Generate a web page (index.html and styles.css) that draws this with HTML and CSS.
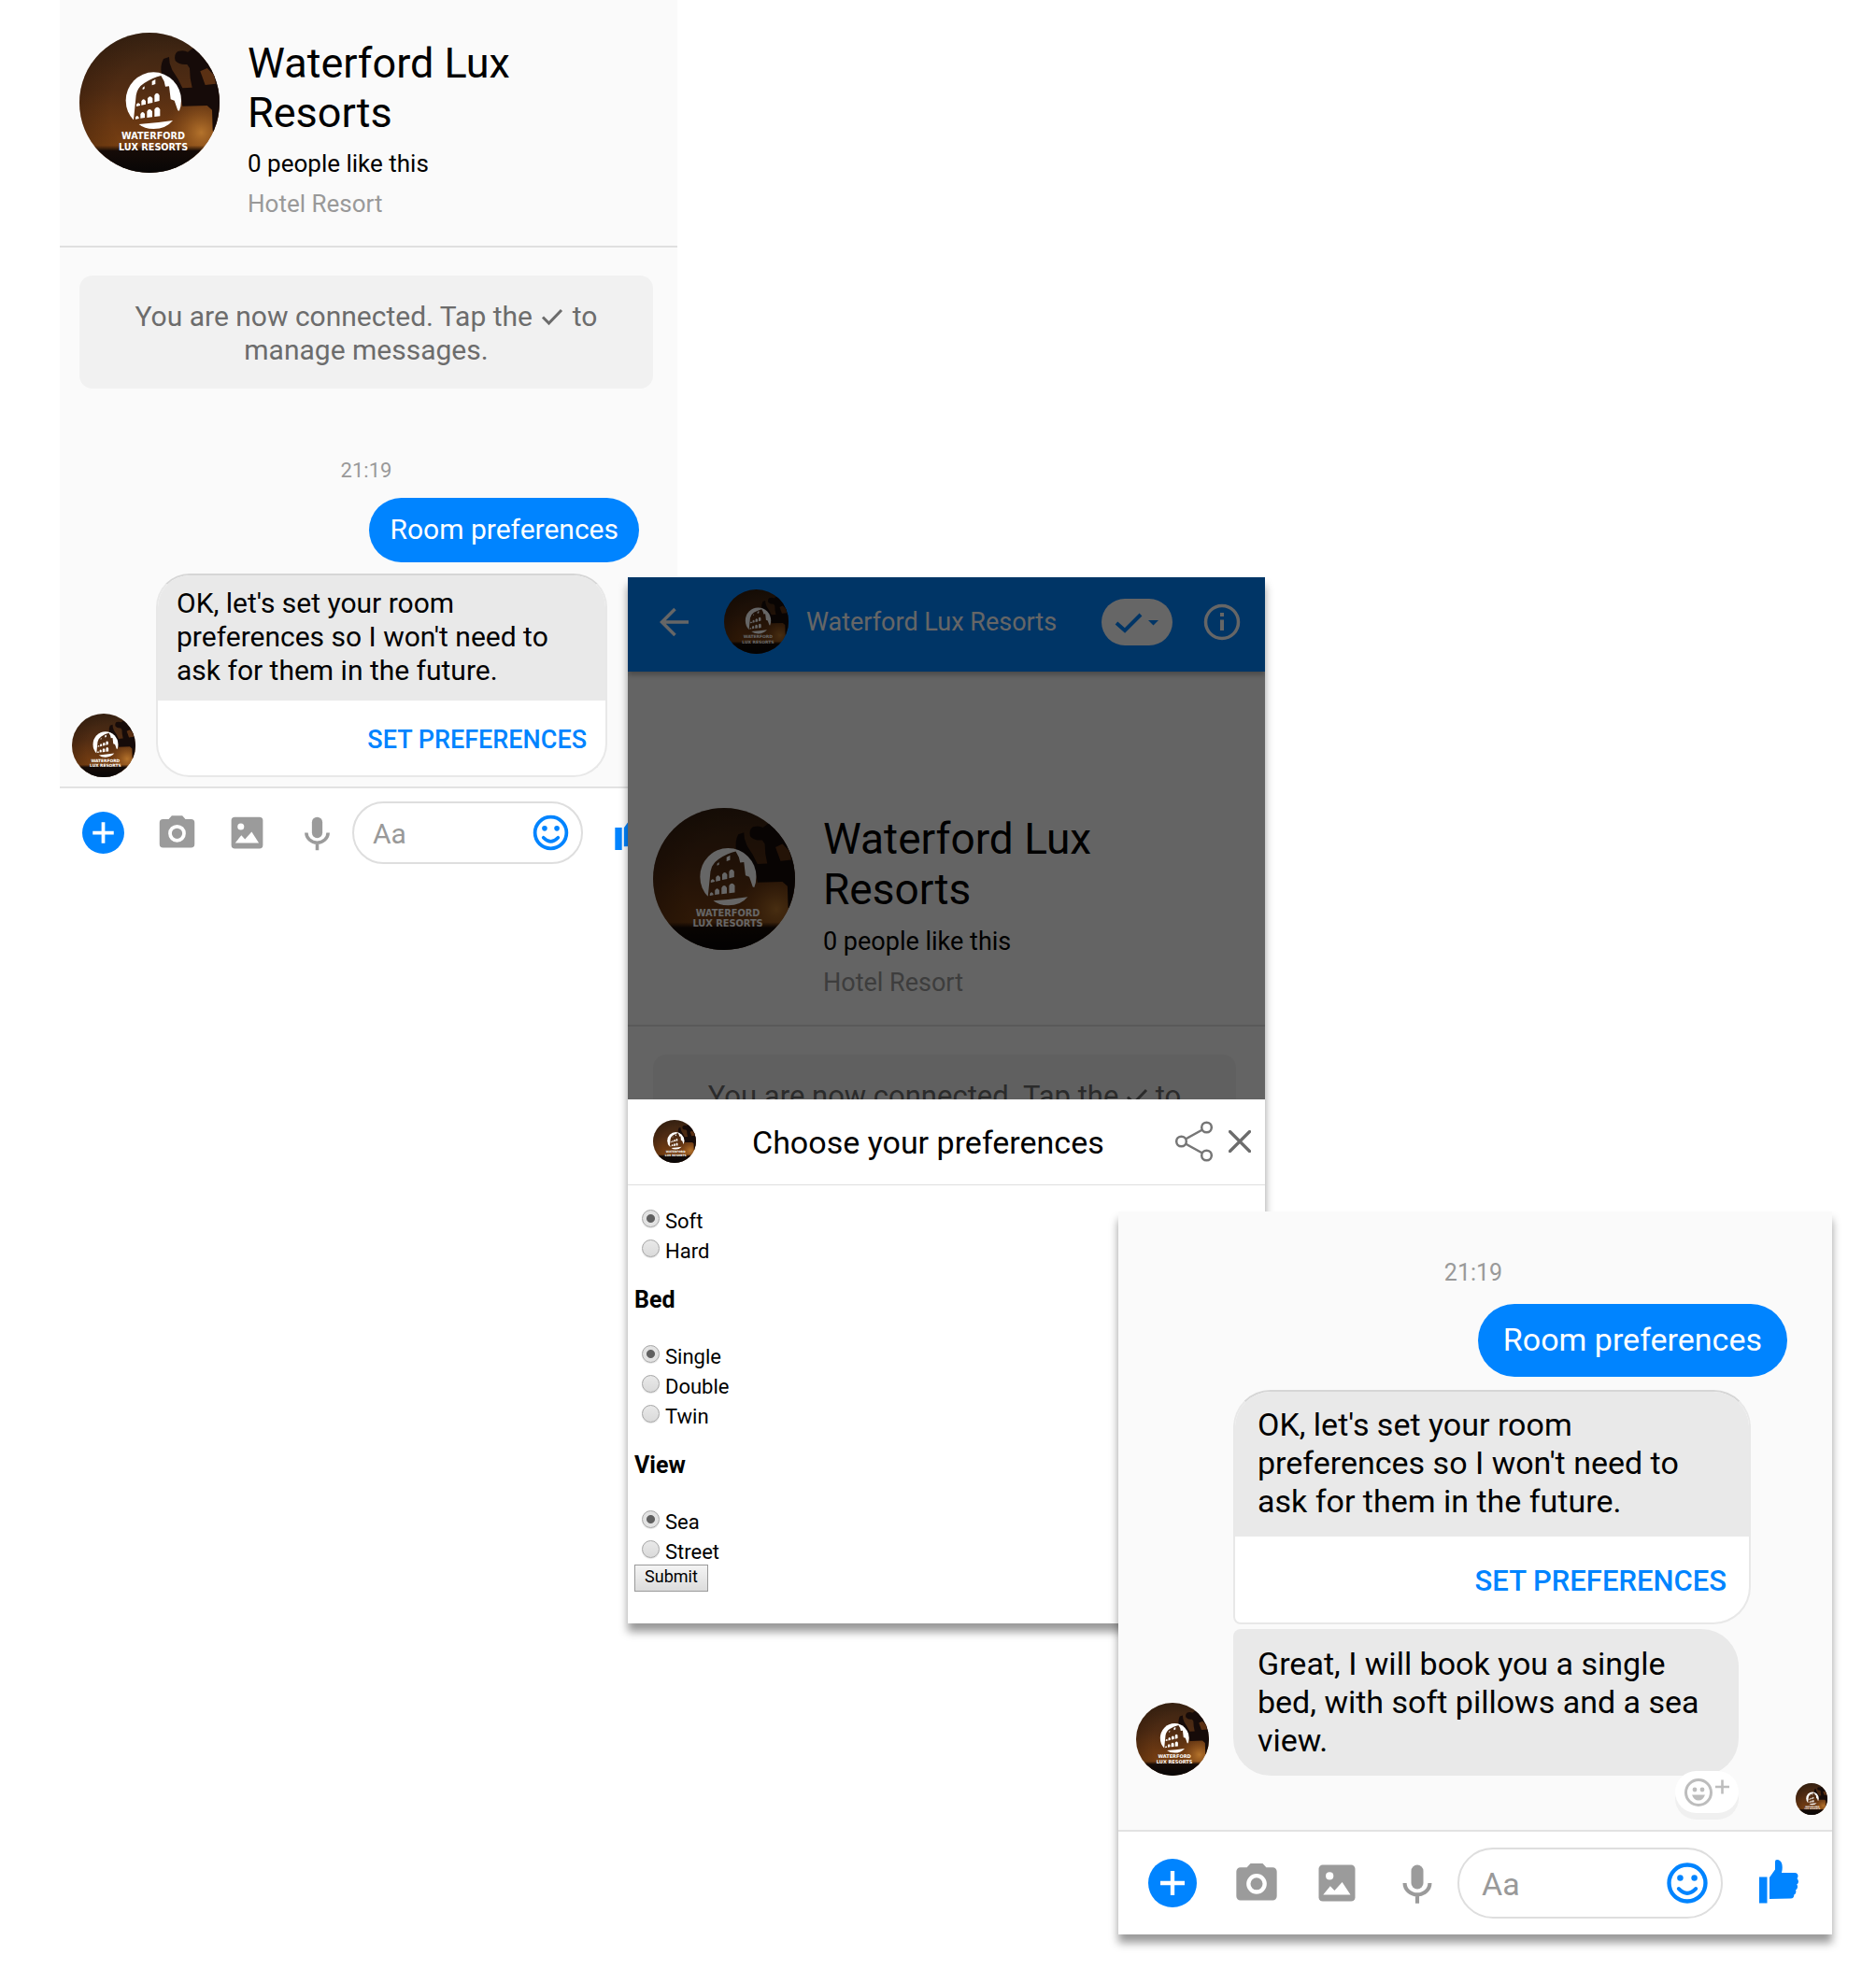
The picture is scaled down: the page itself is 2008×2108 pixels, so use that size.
FILE: index.html
```html
<!DOCTYPE html>
<html lang="en">
<head>
<meta charset="utf-8">
<meta name="viewport" content="width=device-width, initial-scale=1">
<title>Waterford Lux Resorts</title>
<link rel="stylesheet" href="styles.css">
</head>
<body>
<svg class="sprite" aria-hidden="true">
  <defs>
    <linearGradient id="sky" x1="0" y1="0" x2="0" y2="1">
      <stop offset="0" stop-color="#3a2413"/>
      <stop offset=".4" stop-color="#512c13"/>
      <stop offset=".7" stop-color="#6e3a12"/>
      <stop offset=".85" stop-color="#7c4212"/>
      <stop offset="1" stop-color="#4a2409"/>
    </linearGradient>
    <radialGradient id="edge" cx=".62" cy=".55" r=".66">
      <stop offset=".6" stop-color="#1c0d04" stop-opacity="0"/>
      <stop offset="1" stop-color="#1c0d04" stop-opacity=".3"/>
    </radialGradient>
    <radialGradient id="glow" cx="405" cy="335" r="120" gradientUnits="userSpaceOnUse">
      <stop offset="0" stop-color="#b4732c"/>
      <stop offset="1" stop-color="#8a4c18" stop-opacity="0"/>
    </radialGradient>
    <linearGradient id="ground" x1="0" y1="0" x2="0" y2="1">
      <stop offset="0" stop-color="#1a0d06" stop-opacity="0"/>
      <stop offset=".2" stop-color="#150b07"/>
      <stop offset="1" stop-color="#080606"/>
    </linearGradient>
    <clipPath id="disc"><circle cx="239" cy="239" r="225"/></clipPath>
    <mask id="ruin" maskUnits="userSpaceOnUse" x="150" y="130" width="210" height="200">
      <ellipse cx="252" cy="232" rx="89" ry="91" fill="#fff"/>
      <path fill="#000" d="M188 294 L196 215 Q200 190 222 176 Q250 158 276 152 L286 170 L290 187 L302 186 L307 228 L319 232 L330 264 L350 270 V330 H150 V300Z"/>
      <path fill="#fff" d="M205 308 Q262 304 314 296 Q292 323 252 323 Q222 323 205 308Z"/>
      <path fill="#fff" d="M194 292v-6q5-10 11 0v4zM210 289v-14q7-12 14 0v12zM231 287v-20q8-14 17 0v18zM255 284v-24q9-14 18 0v22z"/>
      <path fill="#fff" d="M197 251v-7q6-9 12 0v4zM213 247v-13q7-12 14 0v10zM233 242v-17q8-13 16 0v14zM255 237v-22q8-13 16 0v18z"/>
      <path fill="#fff" d="M217 197v-6l6-5v8zM247 183v-13l11-6v15z"/>
    </mask>
  </defs>
  <symbol id="avatar" viewBox="14 14 450 450">
    <g clip-path="url(#disc)">
      <rect x="14" y="14" width="450" height="450" fill="url(#sky)"/>
      <rect x="14" y="14" width="450" height="450" fill="url(#edge)"/>
      <rect x="290" y="245" width="174" height="175" fill="url(#glow)"/>
      <path fill="#160b09" d="M278 150 Q272 120 284 98 L302 92 L304 112 L312 134 L330 162 L345 192 L376 190 L370 160 L368 128 L360 116 Q334 118 322 104 Q316 84 330 74 Q350 68 362 76 L378 64 H464 V345 L442 330 L440 262 L424 248 L345 250 L340 222 Q320 170 300 160Z"/>
      <path fill="#5a3013" d="M402 138 L424 128 L446 150 L452 178 L418 182Z"/>
      <rect x="14" y="376" width="450" height="88" fill="url(#ground)"/>
      <rect x="150" y="130" width="210" height="200" fill="#fff" mask="url(#ruin)"/>
      <text class="brand" x="251" y="356" text-anchor="middle">WATERFORD</text>
      <text class="brand" x="251" y="391" text-anchor="middle">LUX RESORTS</text>
    </g>
  </symbol>
  <symbol id="plus" viewBox="0 0 24 24">
    <circle cx="12" cy="12" r="12" fill="#0084ff"/>
    <path d="M12 6v12M6 12h12" stroke="#fff" stroke-width="2"/>
  </symbol>
  <symbol id="camera" viewBox="0 0 24 24">
    <path fill="#9b9b9b" d="M9 2.300 7.200 4.300H4a2 2 0 0 0-2 2v12.200a2 2 0 0 0 2 2h16a2 2 0 0 0 2-2V6.300a2 2 0 0 0-2-2h-3.200L15 2.300z"/>
    <circle cx="12" cy="12.400" r="4" fill="none" stroke="#fff" stroke-width="2"/>
  </symbol>
  <symbol id="picture" viewBox="0 0 24 24">
    <rect x="3" y="3" width="18" height="18" rx="2" fill="#9b9b9b"/>
    <circle cx="8.400" cy="8.500" r="1.900" fill="#fff"/>
    <path fill="#fff" d="M5.200 17.800 8.700 13.500l2.100 2.200L14.600 11.500 18.700 17.800z"/>
  </symbol>
  <symbol id="mic" viewBox="0 0 24 24">
    <rect x="9" y="3" width="6" height="12" rx="3" fill="#9b9b9b"/>
    <path d="M5.800 12a6.200 5.700 0 0 0 12.400 0M12 17.500V22" fill="none" stroke="#9b9b9b" stroke-width="1.900"/>
  </symbol>
  <symbol id="smile" viewBox="0 0 24 24">
    <circle cx="12" cy="12" r="9" fill="none" stroke="#0084ff" stroke-width="2"/>
    <circle cx="8.500" cy="9.500" r="1.500" fill="#0084ff"/>
    <circle cx="15.500" cy="9.500" r="1.500" fill="#0084ff"/>
    <path d="M7.800 14.800q4.200 4.400 8.400 0" fill="none" stroke="#0084ff" stroke-width="1.900" stroke-linecap="round"/>
  </symbol>
  <symbol id="thumb" viewBox="0 0 52 52">
    <path fill="#0084ff" d="M5 19.500h8.500v28H5zM16 43V20l6-8.500V3q0-2 2-2 4 0 5.300 4.500 1 4.500-.3 9.500H43q3.500.3 3.500 3.500 0 1.500-1 2.500 1.500 1.500 1.500 3.500t-1.800 3q1 1 .8 3t-2 3q.5 1 .3 2.500t-2 2.500q0 4-3.500 4z"/>
  </symbol>
  <symbol id="tick" viewBox="0 0 24 20">
    <path d="M2 10.500 8.500 17 22 3" fill="none" stroke="currentColor" stroke-width="3"/>
  </symbol>
</svg>

<main class="stage">

  <section class="window window-intro" aria-label="Conversation start">
    <header class="profile">
      <svg class="portrait" role="img" aria-label="Waterford Lux Resorts logo"><use href="#avatar"/></svg>
      <div class="about">
        <h1>Waterford Lux<br>Resorts</h1>
        <p>0 people like this</p>
        <p class="muted">Hotel Resort</p>
      </div>
    </header>
    <p class="notice">You are now connected. Tap the <svg class="tick" aria-hidden="true"><use href="#tick"/></svg> to<br>manage messages.</p>
    <time class="stamp">21:19</time>
    <p class="sent">Room preferences</p>
    <div class="received">
      <svg class="sender" aria-hidden="true"><use href="#avatar"/></svg>
      <div class="stack">
        <article class="card">
          <p>OK, let's set your room preferences so I won't need to ask for them in the future.</p>
          <button type="button">SET PREFERENCES</button>
        </article>
      </div>
    </div>
    <form class="composer">
      <div class="tools">
        <button type="button" class="first" aria-label="More"><svg><use href="#plus"/></svg></button>
        <button type="button" aria-label="Camera"><svg><use href="#camera"/></svg></button>
        <button type="button" aria-label="Gallery"><svg><use href="#picture"/></svg></button>
        <button type="button" aria-label="Voice"><svg><use href="#mic"/></svg></button>
      </div>
      <div class="field">
        <input type="text" placeholder="Aa" aria-label="Message">
        <button type="button" aria-label="Emoji"><svg><use href="#smile"/></svg></button>
      </div>
      <button type="button" aria-label="Like"><svg><use href="#thumb"/></svg></button>
    </form>
  </section>

  <section class="window window-form" aria-label="Choose your preferences">
    <div class="backdrop">
      <nav class="bar">
        <button type="button" class="back" aria-label="Back"><svg viewBox="0 0 32 32"><path d="M31 16H3M16.500 2 2.500 16l14 14" fill="none" stroke="#fff" stroke-width="3.500"/></svg></button>
        <svg class="sender" aria-hidden="true"><use href="#avatar"/></svg>
        <span class="name">Waterford Lux Resorts</span>
        <button type="button" class="manage" aria-label="Manage messages"><svg viewBox="0 0 76 50"><path d="M16 26 25 34 42 17" fill="none" stroke="#0084ff" stroke-width="4"/><path d="M50 23h11l-5.500 5.500z" fill="#0084ff"/></svg></button>
        <button type="button" class="info" aria-label="Info"><svg viewBox="0 0 40 40"><circle cx="20" cy="20" r="17.500" fill="none" stroke="#fff" stroke-width="3.500"/><path d="M20 10v4M20 17.500V29" stroke="#fff" stroke-width="4"/></svg></button>
      </nav>
      <header class="profile">
        <svg class="portrait" aria-hidden="true"><use href="#avatar"/></svg>
        <div class="about">
          <h1>Waterford Lux<br>Resorts</h1>
          <p>0 people like this</p>
          <p class="muted">Hotel Resort</p>
        </div>
      </header>
      <p class="notice">You are now connected. Tap the <svg class="tick" aria-hidden="true"><use href="#tick"/></svg> to<br>manage messages.</p>
    </div>
    <div class="sheet">
      <header class="sheet-head">
        <svg class="badge" aria-hidden="true"><use href="#avatar"/></svg>
        <h2>Choose your preferences</h2>
        <button type="button" class="share" aria-label="Share"><svg viewBox="0 0 40 44"><g fill="none" stroke="#767676" stroke-width="2.500"><circle cx="33.500" cy="7" r="5.300"/><circle cx="6.500" cy="22" r="5.300"/><circle cx="33.500" cy="37" r="5.300"/><path d="M11 19.500 29 9.500M11 24.500l18 10"/></g></svg></button>
        <button type="button" class="close" aria-label="Close"><svg viewBox="0 0 24 24"><path d="M1.500 1.500l21 21M22.500 1.500l-21 21" stroke="#6c6c6c" stroke-width="3.200" stroke-linecap="round"/></svg></button>
      </header>
      <form class="options">
        <div role="radiogroup" aria-label="Pillow">
          <label><input type="radio" name="pillow" checked>Soft</label>
          <label><input type="radio" name="pillow">Hard</label>
        </div>
        <h3 id="bed">Bed</h3>
        <div role="radiogroup" aria-labelledby="bed">
          <label><input type="radio" name="bed" checked>Single</label>
          <label><input type="radio" name="bed">Double</label>
          <label><input type="radio" name="bed">Twin</label>
        </div>
        <h3 id="view">View</h3>
        <div role="radiogroup" aria-labelledby="view">
          <label><input type="radio" name="view" checked>Sea</label>
          <label><input type="radio" name="view">Street</label>
        </div>
        <button type="button" class="submit">Submit</button>
      </form>
    </div>
  </section>

  <section class="window window-result" aria-label="Conversation result">
    <time class="stamp">21:19</time>
    <p class="sent">Room preferences</p>
    <div class="received">
      <svg class="sender" aria-hidden="true"><use href="#avatar"/></svg>
      <div class="stack">
        <article class="card">
          <p>OK, let's set your room preferences so I won't need to ask for them in the future.</p>
          <button type="button">SET PREFERENCES</button>
        </article>
        <div class="reply">
          <p>Great, I will book you a single bed, with soft pillows and a sea view.</p>
          <button type="button" class="react" aria-label="Add reaction"><svg viewBox="0 0 68 45"><circle cx="25" cy="23" r="13.500" fill="none" stroke="#bdbdbd" stroke-width="3"/><circle cx="21" cy="20" r="2.400" fill="#bdbdbd"/><circle cx="29" cy="20" r="2.400" fill="#bdbdbd"/><path d="M18 25.500h14q-2 6-7 6t-7-6z" fill="#bdbdbd"/><path d="M50.500 9.500v15M43 17h15" stroke="#bdbdbd" stroke-width="2.600"/></svg></button>
        </div>
      </div>
    </div>
    <div class="seen"><svg role="img" aria-label="Seen"><use href="#avatar"/></svg></div>
    <form class="composer">
      <div class="tools">
        <button type="button" class="first" aria-label="More"><svg><use href="#plus"/></svg></button>
        <button type="button" aria-label="Camera"><svg><use href="#camera"/></svg></button>
        <button type="button" aria-label="Gallery"><svg><use href="#picture"/></svg></button>
        <button type="button" aria-label="Voice"><svg><use href="#mic"/></svg></button>
      </div>
      <div class="field">
        <input type="text" placeholder="Aa" aria-label="Message">
        <button type="button" aria-label="Emoji"><svg><use href="#smile"/></svg></button>
      </div>
      <button type="button" aria-label="Like"><svg><use href="#thumb"/></svg></button>
    </form>
  </section>

</main>
</body>
</html>
```
FILE: styles.css
```css
*, *::before, *::after { box-sizing: border-box; }

body {
  margin: 0;
  background: #fff;
  color: #000;
  font-family: Roboto, "Liberation Sans", sans-serif;
}

h1, h2, h3, p { margin: 0; font-weight: 400; }

button {
  display: block;
  flex: none;
  margin: 0;
  padding: 0;
  border: 0;
  background: none;
  font: inherit;
  color: inherit;
}

svg { display: block; flex: none; }

.sprite { position: absolute; width: 0; height: 0; }

.brand {
  fill: #fff;
  font: 700 29px "DejaVu Sans", sans-serif;
}

/* Three overlapping windows share one set of column lines. */
.stage {
  display: grid;
  grid-template-columns:
    minmax(0, 64fr) minmax(0, 608fr) minmax(0, 53fr) minmax(0, 472fr)
    minmax(0, 157fr) minmax(0, 607fr) minmax(0, 47fr);
  grid-template-rows: 618px 679px auto;
  align-items: start;
  padding-bottom: 37px;
}

.window {
  display: flex;
  flex-direction: column;
  background: #fafafa;
}

.window-intro {
  grid-area: 1 / 2 / 3 / 4;
  --title: 45px; --title-line: 53px;
  --small: 26px; --small-line: 43px;
  --text: 30px; --line: 36px;
  --stamp: 22px; --stamp-line: 26px;
  --portrait: 150px; --sender: 68px;
  --icon: 45px; --gap: 30px; --half-gap: 15px;
  --bubble-x: 22px; --card-y: 14px; --sent-x: 22px; --sent-y: 16px;
  --action: 82px; --action-text: 27px;
  --radius: 36px; --field: 67px;
}

.window-form {
  grid-area: 2 / 3 / 4 / 6;
  --title: 46px; --title-line: 54px;
  --small: 27px; --small-line: 44px;
  --text: 31px; --line: 37px;
  --portrait: 152px; --sender: 69px;
}

.window-result {
  grid-area: 3 / 5 / 4 / 7;
  padding-top: 51px;
  --text: 34px; --line: 41px;
  --stamp: 25px; --stamp-line: 30px;
  --sender: 78px;
  --icon: 52px; --gap: 34px; --half-gap: 17px;
  --bubble-x: 26px; --card-y: 17px; --sent-x: 27px; --sent-y: 18px;
  --action: 94px; --action-text: 31px;
  --radius: 40px; --field: 76px;
}

.window-form, .window-result { box-shadow: 0 9px 9px rgba(0, 0, 0, .4); }

/* Page profile */
.profile {
  display: flex;
  align-items: flex-start;
  gap: 30px;
  padding: 35px 21px 23px;
  border-bottom: 2px solid #dfdfdf;
}

.portrait { width: var(--portrait); height: var(--portrait); }

.about { padding-top: 6px; }

.about h1 {
  margin-bottom: 7px;
  font-size: var(--title);
  line-height: var(--title-line);
}

.about p { font-size: var(--small); line-height: var(--small-line); }

.about .muted { color: #999; }

.notice {
  margin: 30px 26px 0 21px;
  padding: 26px 0 23px;
  border-radius: 14px;
  background: #f1f1f1;
  color: #6c6c6c;
  font-size: var(--text);
  line-height: var(--line);
  text-align: center;
}

.tick { display: inline-block; width: 24px; height: 20px; }

.window-intro .tick { margin: 0 2px; }

/* Messages */
.stamp {
  color: #999;
  font-size: var(--stamp);
  line-height: var(--stamp-line);
  text-align: center;
}

.window-intro .stamp { margin: 75px 26px 16px 21px; }
.window-result .stamp { margin: 0 4px 18px 0; }

.sent {
  align-self: flex-end;
  padding: var(--sent-y) var(--sent-x) calc(var(--sent-y) + 1px);
  border-radius: var(--radius);
  background: #0084ff;
  color: #fff;
  font-size: var(--text);
  line-height: var(--line);
}

.window-intro .sent { margin: 0 41px 12px 0; }
.window-result .sent { margin: 0 48px 14px 0; }

.received { display: flex; align-items: flex-end; }

.window-intro .received { gap: 22px; padding: 0 75px 10px 13px; }
.window-result .received { gap: 26px; padding: 0 87px 0 19px; }

.sender { width: var(--sender); height: var(--sender); }

.stack { flex: 1; min-width: 0; }

.card {
  overflow: hidden;
  border: 2px solid #e8e8e8;
  border-top-color: #d6d6d6;
  border-radius: var(--radius);
  background: #fff;
}

.window-result .card { border-bottom-left-radius: 8px; }

.card p {
  padding: calc(var(--card-y) - 2px) calc(var(--bubble-x) - 2px) var(--card-y);
  background: #e9e9e9;
  font-size: var(--text);
  line-height: var(--line);
}

.card button {
  width: 100%;
  height: calc(var(--action) - 2px);
  padding: 3px calc(var(--bubble-x) - 2px) 0;
  color: #0084ff;
  font-size: var(--action-text);
  font-weight: 500;
  text-align: right;
}

.reply {
  position: relative;
  margin: 5px 13px 0 0;
  padding: var(--card-y) var(--bubble-x);
  border-radius: 8px var(--radius) var(--radius) var(--radius);
  background: #e9e9e9;
  font-size: var(--text);
  line-height: var(--line);
}

.react {
  position: absolute;
  right: 0;
  bottom: -40px;
  width: 68px;
  height: 45px;
  border-radius: 23px;
  background: #fff;
  box-shadow: 0 7px 0 #f0f0f0;
}

.seen {
  display: flex;
  justify-content: flex-end;
  padding: 8px 5px 16px;
}

.seen svg { width: 34px; height: 34px; }

/* Composer */
.composer {
  display: flex;
  align-items: center;
  gap: var(--gap);
  padding: 14px 26px 14px 24px;
  border-top: 2px solid #e2e2e2;
  background: #fff;
}

.window-result .composer { padding: 17px 31px 17px 32px; }

.composer svg { width: var(--icon); height: var(--icon); }

.tools {
  display: flex;
  gap: var(--gap);
  margin-right: calc(0px - var(--half-gap));
}

.tools .first { margin-right: 4px; }

.field {
  display: flex;
  flex: 1;
  align-items: center;
  min-width: 0;
  height: var(--field);
  padding: 0 10px 0 calc(var(--bubble-x) - 2px);
  border: 2px solid #dedede;
  border-radius: 38px;
}

.field input {
  flex: 1;
  min-width: 0;
  padding: 2px 0 0;
  border: 0;
  outline: 0;
  background: none;
  font: inherit;
  font-size: var(--text);
}

.field input::placeholder { color: #999; opacity: 1; }

/* Dimmed conversation behind the sheet */
.backdrop {
  position: relative;
  height: 559px;
  overflow: hidden;
}

.backdrop::after {
  content: "";
  position: absolute;
  inset: 0;
  background: rgba(0, 0, 0, .6);
}

.backdrop .profile { padding: 146px 27px 23px; }
.backdrop .notice { margin: 30px 31px 0 27px; }

.bar {
  display: flex;
  align-items: center;
  height: 101px;
  padding: 0 26px 6px 34px;
  background: #0084ff;
  box-shadow: 0 3px 6px rgba(0, 0, 0, .3);
  color: #fff;
}

.back { margin-right: 37px; }
.back svg { width: 32px; height: 32px; }

.name { flex: 1; margin-left: 19px; font-size: var(--small); }

.manage {
  margin-right: 33px;
  border-radius: 25px;
  background: #fff;
}

.manage svg { width: 76px; height: 50px; }
.info svg { width: 40px; height: 40px; }

/* Preferences sheet */
.sheet { background: #fff; }

.sheet-head {
  display: flex;
  align-items: center;
  height: 92px;
  padding: 0 15px 2px 27px;
  border-bottom: 1px solid #dedede;
}

.badge { width: 46px; height: 46px; }

.sheet-head h2 {
  flex: 1;
  padding: 3px 0 0 60px;
  font-size: 34px;
  line-height: 40px;
}

.share { margin-right: 17px; }
.share svg { width: 40px; height: 44px; }
.close svg { width: 24px; height: 24px; }

.options { padding: 23px 7px 34px; }

.options label {
  display: flex;
  align-items: flex-start;
  gap: 6px;
  padding-left: 8px;
  font-size: 22px;
  line-height: 32px;
}

.options input {
  appearance: none;
  width: 19px;
  height: 19px;
  margin: 3px 0 0;
  border: 1px solid #a6a6a6;
  border-radius: 50%;
  background: linear-gradient(#e9e9e9, #dadada);
  box-shadow: 0 1px 1px rgba(0, 0, 0, .12);
}

.options input:checked {
  background: radial-gradient(circle, #606060 4px, #e2e2e2 5px);
}

.options h3 {
  margin: 21px 0 30px;
  font-size: 25px;
  font-weight: 700;
  line-height: 30px;
}

.submit {
  width: 79px;
  height: 29px;
  margin-top: -3px;
  padding-bottom: 4px;
  border: 1px solid #999;
  background: linear-gradient(#f4f4f4, #dcdcdc);
  font-size: 18px;
  line-height: 22px;
}
```
